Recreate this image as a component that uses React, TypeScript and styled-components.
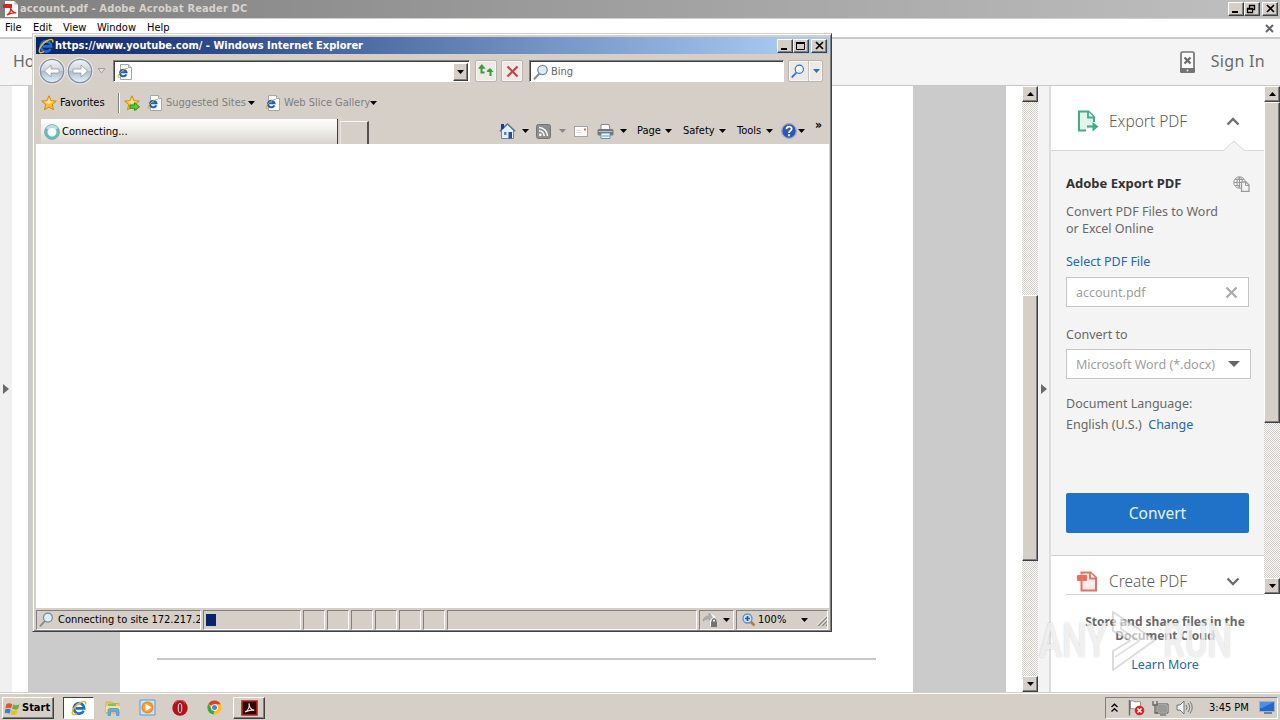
import React from 'react';
import styled, { createGlobalStyle, css } from 'styled-components';

const UI = `'DejaVu Sans Condensed', 'DejaVu Sans', sans-serif`;
const CLEAN = `'Noto Sans', 'Open Sans', sans-serif`;
const FACE = '#d5cfc8';

const Global = createGlobalStyle`
  * { box-sizing: border-box; }
  body { margin: 0; overflow: hidden; background: #fff; }
  svg { display: block; flex: none; }
`;

const raised = css`
  background: ${FACE};
  border: 1px solid;
  border-color: #fff #404040 #404040 #fff;
  box-shadow: inset -1px -1px 0 #808080;
`;
const sunken = css`
  border: 1px solid;
  border-color: #808080 #fff #fff #808080;
`;

const Desktop = styled.div`
  position: relative;
  width: 1280px;
  height: 720px;
  display: flex;
  flex-direction: column;
  overflow: hidden;
  font-family: ${UI};
  font-size: 11px;
  color: #000;
`;

const Label = styled.span<{ $w?: number; $ls?: number; $size?: number; $color?: string; $bold?: boolean; $clean?: boolean; $ml?: number; $light?: boolean }>`
  flex: none;
  white-space: nowrap;
  line-height: 1.2;
  width: ${p => (p.$w ? `${p.$w}px` : 'auto')};
  letter-spacing: ${p => p.$ls ?? 0}px;
  font-size: ${p => p.$size ?? 11}px;
  color: ${p => p.$color ?? '#000'};
  font-weight: ${p => (p.$bold ? 700 : p.$light ? 300 : 400)};
  font-family: ${p => (p.$clean ? CLEAN : UI)};
  margin-left: ${p => p.$ml ?? 0}px;
`;

const TitleBar = styled.div`
  height: 19px;
  flex: none;
  display: flex;
  align-items: center;
  padding: 0 2px 1px 3px;
  background: linear-gradient(90deg, #808080, #c0c0c0);
  border-bottom: 1px solid #d4d0c8;
`;
const Spacer = styled.div`flex: 1;`;

const CaptionButton = styled.div<{ $gap?: number }>`
  ${raised}
  width: 16px;
  height: 14px;
  margin-left: ${p => p.$gap ?? 0}px;
  display: flex;
  align-items: center;
  justify-content: center;
`;

const MenuBar = styled.div`
  height: 20px;
  flex: none;
  display: flex;
  align-items: center;
  background: #fff;
  border-bottom: 2px solid #cacaca;
  padding: 0 6px 0 5px;
`;

const HomeBar = styled.div`
  height: 47px;
  flex: none;
  display: flex;
  align-items: center;
  background: #f4f4f4;
  border-bottom: 1px solid #c8c8c8;
  padding: 0 15px 0 13px;
`;

const Body = styled.div`
  flex: 1;
  min-height: 0;
  display: flex;
`;
const NavStrip = styled.div`
  width: 12px;
  background: #f0f0f0;
  display: flex;
  align-items: center;
  padding-left: 3px;
`;
const Gutter = styled.div`width: 16px; background: #fff;`;
const Canvas = styled.div`
  width: 978px;
  background: #cbcbcb;
  padding: 0 93px 0 92px;
`;
const Page = styled.div`
  height: 100%;
  background: #fff;
  padding: 572px 37px 0;
`;
const PageRule = styled.div`height: 2px; background: #c8c8c8;`;

const Track = styled.div<{ $h?: number }>`
  width: 16px;
  height: ${p => (p.$h ? `${p.$h}px` : '100%')};
  flex: none;
  display: flex;
  flex-direction: column;
  background: repeating-conic-gradient(#fff 0 25%, #d4cdc6 0 50%) 0 0 / 2px 2px;
`;
const ArrowButton = styled.div`
  ${raised}
  height: 16px;
  flex: none;
  display: flex;
  align-items: center;
  justify-content: center;
`;
const Thumb = styled.div<{ $h: number; $top: number }>`
  ${raised}
  height: ${p => p.$h}px;
  margin-top: ${p => p.$top}px;
`;

const Splitter = styled.div`
  width: 13px;
  background: #f3f3f3;
  border-right: 2px solid #dedede;
  display: flex;
  align-items: center;
  padding-left: 3px;
`;
const Side = styled.div`flex: 1; display: flex; flex-direction: column; background: #fff;`;
const Tools = styled.div`height: 508px; display: flex;`;
const ToolColumn = styled.div`flex: 1; display: flex; flex-direction: column;`;
const ToolHeader = styled.div<{ $h: number; $pad: number }>`
  position: relative;
  height: ${p => p.$h}px;
  display: flex;
  align-items: center;
  padding: ${p => p.$pad}px 24px 0 26px;
`;
const Notch = styled.svg`position: absolute; left: 172px; bottom: -1px;`;
const Panel = styled.div`
  height: 406px;
  background: #f4f4f4;
  border-top: 1px solid #d8d8d8;
  border-bottom: 1px solid #d0d0d0;
  padding: 23px 13px 0 15px;
  display: flex;
  flex-direction: column;
  align-items: flex-start;
`;
const PanelTitle = styled.div`width: 184px; height: 20px; display: flex; justify-content: space-between; align-items: center;`;
const Para = styled.div<{ $mt: number; $color?: string }>`
  margin-top: ${p => p.$mt}px;
  font: 12.5px/17px ${CLEAN};
  color: ${p => p.$color ?? '#686868'};
  white-space: pre;
`;
const Field = styled.div<{ $w: number; $mt: number }>`
  width: ${p => p.$w}px;
  height: 30px;
  margin-top: ${p => p.$mt}px;
  border: 1px solid #c6c6c6;
  background: #fff;
  display: flex;
  align-items: center;
  justify-content: space-between;
  padding: 0 10px 0 9px;
`;
const Link = styled.span`color: #2468b0;`;
const ConvertButton = styled.div`
  width: 183px;
  height: 40px;
  margin-top: 60px;
  border-radius: 2px;
  background: #2072c9;
  display: flex;
  align-items: center;
  justify-content: center;
`;
const Footer = styled.div`
  flex: 1;
  margin-left: 15px;
  margin-right: 16px;
  border-top: 1px solid #d4d4d4;
  display: flex;
  flex-direction: column;
  align-items: center;
  padding-top: 20px;
`;

/* browser window */
const Window = styled.div`
  position: absolute;
  left: 32px;
  top: 33px;
  width: 800px;
  height: 599px;
  background: ${FACE};
  border: 1px solid;
  border-color: #d4d0c8 #404040 #404040 #d4d0c8;
  box-shadow: inset 1px 1px 0 #fff, inset -1px -1px 0 #808080;
  padding: 3px 2px 1px 3px;
  display: flex;
  flex-direction: column;
`;
const WinTitle = styled.div`
  height: 17px;
  flex: none;
  display: flex;
  align-items: center;
  padding: 0 2px;
  background: linear-gradient(90deg, #0a246a, #a6caf0 95%);
`;
const NavRow = styled.div`
  height: 34px;
  display: flex;
  align-items: center;
  padding-left: 2px;
`;
const Input = styled.div<{ $w: number; $ml: number }>`
  ${sunken}
  box-shadow: inset 1px 1px 0 #404040;
  width: ${p => p.$w}px;
  height: 22px;
  margin-left: ${p => p.$ml}px;
  background: #fff;
  display: flex;
  align-items: center;
  padding: 1px 1px 0 3px;
`;
const DropButton = styled(ArrowButton)`width: 15px; height: 18px; margin-bottom: 0;`;
const SoftButton = styled.div<{ $w: number; $ml: number }>`
  width: ${p => p.$w}px;
  height: 22px;
  margin-left: ${p => p.$ml}px;
  border: 1px solid #b8b4b0;
  border-radius: 2px;
  background: #ece9e6;
  box-shadow: inset 0 0 0 1px #f8f6f4;
  display: flex;
  align-items: center;
  justify-content: center;
`;
const Divider = styled.div<{ $ml: number; $h: number; $c?: string }>`
  width: 2px;
  height: ${p => p.$h}px;
  margin-left: ${p => p.$ml}px;
  background: linear-gradient(90deg, ${p => p.$c ?? '#808080'} 50%, #fff 50%);
`;
const FavRow = styled.div`height: 29px; display: flex; align-items: center; padding-left: 5px;`;
const TabRow = styled.div`height: 27px; display: flex; align-items: flex-end; padding-left: 5px;`;
const Tab = styled.div`
  width: 297px;
  height: 25px;
  padding-left: 3px;
  display: flex;
  align-items: center;
  background: linear-gradient(#fff, #f2f0ec 40%, #d8d3cb);
  border-right: 1px solid #404040;
`;
const NewTab = styled.div`
  width: 29px;
  height: 23px;
  margin-left: 2px;
  border-top: 1px solid #f8f6f4;
  border-left: 1px solid #eae6e2;
  border-right: 2px solid #55504c;
`;
const Commands = styled.div`height: 26px; flex: 1; display: flex; align-items: center; margin-left: 130px;`;
const Chevrons = styled(Label)`align-self: flex-start;`;
const View = styled.div`flex: 1; background: #fff;`;
const StatusBar = styled.div`height: 22px; display: flex; align-items: center; gap: 2px; padding-top: 1px;`;
const Pane = styled.div<{ $w: number }>`
  ${sunken}
  width: ${p => p.$w}px;
  height: 20px;
  flex: none;
  overflow: hidden;
  display: flex;
  align-items: center;
  padding-left: 2px;
`;
const Block = styled.div`width: 10px; height: 12px; background: #0a246a;`;

const Gap = styled.div<{ $w: number }>`width: ${p => p.$w}px; flex: none;`;

const Taskbar = styled.div`
  height: 28px;
  flex: none;
  display: flex;
  align-items: center;
  background: ${FACE};
  border-top: 1px solid #d4d0c8;
  box-shadow: inset 0 1px 0 #fff;
  padding: 2px 2px 0 2px;
`;
const Start = styled.div`
  ${raised}
  width: 52px;
  height: 22px;
  display: flex;
  align-items: center;
  padding-left: 2px;
`;
const Task = styled.div<{ $kind: 'pressed' | 'raised' | 'flat'; $ml: number; $w: number }>`
  width: ${p => p.$w}px;
  height: 22px;
  margin-left: ${p => p.$ml}px;
  display: flex;
  align-items: center;
  justify-content: center;
  ${p => p.$kind === 'raised' && raised}
  ${p => p.$kind === 'pressed' && css`background: #fff; border: 1px solid; border-color: #404040 #fff #fff #404040;`}
`;
const Tray = styled.div`
  ${sunken}
  width: 173px;
  height: 22px;
  display: flex;
  align-items: center;
  padding-left: 5px;
`;

const Watermark = styled.div`
  position: absolute;
  left: 1039px;
  top: 609px;
  height: 64px;
  display: flex;
  align-items: center;
`;
const MarkText = styled.span<{ $w: number }>`
  width: ${p => p.$w}px;
  font: 500 48px/64px Roboto, sans-serif;
  color: rgba(255, 255, 255, 0.72);
  text-shadow: 0 0 2px rgba(130, 130, 130, 0.45);
  transform: scaleX(0.72);
  transform-origin: 0 50%;
  white-space: nowrap;
`;

const Tri = ({ dir = 'down', w = 7, c = '#000' }: { dir?: 'down' | 'up' | 'right'; w?: number; c?: string }) => {
  const h = Math.ceil(w / 2);
  if (dir === 'right') return <svg width={h + 2} height={w + 3}><path d={`M0 0V${w + 3}L${h + 2} ${(w + 3) / 2}Z`} fill={c} /></svg>;
  return <svg width={w} height={h}><path d={dir === 'down' ? `M0 0H${w}L${w / 2} ${h}Z` : `M0 ${h}H${w}L${w / 2} 0Z`} fill={c} /></svg>;
};

const IeGlyph = ({ s = 16 }: { s?: number }) => (
  <svg width={s} height={s} viewBox="0 0 16 16">
    <path d="M12.6 10.8A5.2 5.2 0 1 1 13.2 8.4H4.6" fill="none" stroke="#1c6fcd" strokeWidth="2.7" />
    <path d="M4.6 6.2a4.2 4.2 0 0 1 5-2.2" fill="none" stroke="#7cc4f4" strokeWidth="1.1" />
    <path d="M14.6 4.4C15.6 1.2 12.6.6 8.6 3 4.600 5.400.8 10 1.200 13.200c.3 2.200 2.600 1.600 4.600.4" fill="none" stroke="#f0b41c" strokeWidth="1.500" />
  </svg>
);
const IePage = () => (
  <svg width="16" height="16" viewBox="0 0 16 16">
    <path d="M3.500.5h8l3 3v12h-11z" fill="#fdfdfd" stroke="#a4a8ac" />
    <path d="M11.500.5v3h3" fill="#dde" stroke="#a4a8ac" />
    <path d="M9.300 10.300A3.300 3.300 0 1 1 9.500 8.300H4" fill="none" stroke="#1b5fc0" strokeWidth="2" />
    <path d="M11 4.500C10 3.300 1.500 8 1 12.500c0 1.200 1 1.200 2.500.5" fill="none" stroke="#e3ae20" />
  </svg>
);
const Star = ({ add = false }: { add?: boolean }) => (
  <svg width="16" height="16" viewBox="0 0 16 16">
    <path d="M8 .8l2.100 4.800 5.200.5-3.900 3.500 1.100 5.200L8 12.100l-4.500 2.700 1.100-5.200L.7 6.100l5.200-.5z" fill="#fbbd2c" stroke="#d08316" strokeWidth=".9" />
    <path d="M8 2.800l1.300 3.500 3.300.4-5 2.200-4.500-2.200 3.500-.4z" fill="#ffe58a" />
    {add && <path d="M6 10h4.500V7.600L15.600 11.800 10.500 15.600V13.300H6z" fill="#59c83c" stroke="#218a1c" strokeWidth=".9" />}
  </svg>
);
const Round = ({ flip = false }: { flip?: boolean }) => (
  <svg width="28" height="28" viewBox="0 0 28 28">
    <defs>
      <linearGradient id="orb" x1="0" y1="0" x2="0" y2="1">
        <stop offset="0" stopColor="#f4f6f9" /><stop offset=".48" stopColor="#ccd2dc" /><stop offset=".52" stopColor="#aebccc" /><stop offset="1" stopColor="#e2f4fc" />
      </linearGradient>
    </defs>
    <circle cx="14" cy="14" r="13.400" fill="#e9e8ea" />
    <circle cx="14" cy="14" r="11.700" fill="url(#orb)" stroke="#858d9a" strokeWidth="1.200" />
    <path transform={flip ? 'translate(28 0) scale(-1 1)' : undefined} d="M6.500 14l6.500-6v4h8v4h-8v4z" fill="#fff" stroke="#8f9bab" strokeWidth=".8" />
  </svg>
);
const Lens = ({ c = '#7a8792', f = '#dcedfa', h = '#8b8b8b', s = 16 }: { c?: string; f?: string; h?: string; s?: number }) => (
  <svg width={s} height={s} viewBox="0 0 16 16">
    <path d="M6 10L1.500 14.800" stroke={h} strokeWidth="2" strokeLinecap="round" />
    <circle cx="9.500" cy="6" r="4.700" fill={f} stroke={c} strokeWidth="1.300" />
  </svg>
);
const Min = () => <svg width="12" height="10"><path d="M2 8h6" stroke="#000" strokeWidth="2" /></svg>;
const Max = () => <svg width="12" height="10"><path d="M1.500 1.500h8v7h-8zM1 1.500h9" fill="none" stroke="#000" /><path d="M1 2h9" stroke="#000" strokeWidth="2" /></svg>;
const Restore = () => <svg width="12" height="10"><path d="M3.500 4V1.500h5v4H7M3 1.500h6M1.500 4.500h5v4h-5zM1 5h6" fill="none" stroke="#000" strokeWidth="1.300" /></svg>;
const Cross = ({ s = 9, c = '#000', w = 1.700 }: { s?: number; c?: string; w?: number }) => (
  <svg width={s} height={s} viewBox="0 0 9 9"><path d="M1 1l7 7M8 1L1 8" stroke={c} strokeWidth={w} /></svg>
);
const PdfFile = () => (
  <svg width="16" height="16" viewBox="0 0 16 16">
    <path d="M2 0h9l4 4v12H2z" fill="#fdf7f5" /><path d="M11 0v4h4" fill="#d9d2d0" />
    <path d="M0 3h9v4H0z" fill="#d8241c" />
    <path d="M4 14c3-2 4-5 3.600-7 1 3 3 4.600 5.600 5-3-.3-6 .3-9.200 2z" fill="none" stroke="#d42a20" strokeWidth="1.200" />
  </svg>
);
const Phone = () => (
  <svg width="15" height="22" viewBox="0 0 15 22">
    <rect x="1" y="1" width="13" height="20" rx="1.500" fill="#fafafa" stroke="#747474" strokeWidth="1.700" />
    <path d="M0 17h15v3.500a1.500 1.500 0 0 1-1.500 1.500h-12A1.500 1.500 0 0 1 0 20.500z" fill="#747474" />
    <path d="M4.500 6.500l6 6M10.500 6.500l-6 6" stroke="#6a6a6a" strokeWidth="2.200" /><circle cx="7.500" cy="19.500" r=".9" fill="#eee" />
  </svg>
);
const ExportIcon = () => (
  <svg width="22" height="23" viewBox="0 0 22 23">
    <path d="M9 20.500H2V1.500h9.500l5.500 5.500v5" fill="#e4f5ee" stroke="#3fae85" strokeWidth="2" />
    <path d="M11 1.500V7.500h6" fill="#fff" stroke="#3fae85" strokeWidth="1.800" />
    <path d="M10 16.500h8" stroke="#3fae85" strokeWidth="2.200" /><path d="M15.500 12l6 4.500-6 5z" fill="#3fae85" />
  </svg>
);
const CreateIcon = () => (
  <svg width="22" height="21" viewBox="0 0 22 21">
    <path d="M4.500 9.500V19.500h14.500V6.500L13.500 1.500h-9v2" fill="#fdecea" stroke="#e8705f" strokeWidth="2" />
    <path d="M13 1.500v6h6" fill="#fff" stroke="#e8705f" strokeWidth="1.800" />
    <rect x="0" y="4" width="10" height="6" rx="1" fill="#e8705f" />
  </svg>
);
const Chevron = ({ up = false }: { up?: boolean }) => (
  <svg width="14" height="9" viewBox="0 0 14 9"><path d={up ? 'M1.500 7.500L7 2l5.500 5.500' : 'M1.500 1.500L7 7l5.500-5.500'} fill="none" stroke="#6e6e6e" strokeWidth="2.400" /></svg>
);
const GlobePage = () => (
  <svg width="17" height="16" viewBox="0 0 17 16" fill="none" stroke="#9a9a9a">
    <circle cx="6.500" cy="6.500" r="5.700" /><path d="M1 6.500h8M6.500 1v11M2 3.500h9M2 9.500h5M6.500 1C3 4 3 9 6.500 12M6.500 1c2 1 3 3 3 4" />
    <path d="M8.500 6h4.500l3 3v6.500H8.500z" fill="#f4f4f4" strokeWidth="1.300" /><path d="M12.500 6v3.500H16" />
  </svg>
);
const Home = () => (
  <svg width="17" height="16" viewBox="0 0 17 16">
    <path d="M2.500 7v8.500h12V7L8.500 1.500z" fill="#e6effa" stroke="#6a83b0" />
    <path d="M.8 8.200L8.500 1l7.700 7.200" fill="none" stroke="#59759f" strokeWidth="1.500" />
    <path d="M2 1h3v4L2 7z" fill="#2433b4" /><path d="M9.500 9h3.500v6.500H9.500z" fill="#24529a" /><path d="M5 9h2.500v3H5z" fill="#4e86cc" />
  </svg>
);
const Rss = () => (
  <svg width="15" height="15" viewBox="0 0 15 15">
    <rect x=".5" y=".5" width="14" height="14" rx="2" fill="#8e8e8e" stroke="#757575" />
    <circle cx="4.300" cy="10.800" r="1.400" fill="#fff" /><path d="M3 6.800A5.200 5.200 0 0 1 8.200 12M3 3.500A8.500 8.500 0 0 1 11.500 12" fill="none" stroke="#fff" strokeWidth="1.500" />
  </svg>
);
const Mail = () => (
  <svg width="14" height="11" viewBox="0 0 14 11"><rect x=".5" y=".5" width="13" height="10" fill="#fdfcfb" stroke="#a5a3a3" /><path d="M10 2.500h2v2h-2z" fill="#df6b62" /><path d="M2.500 4.500h4M2.500 6.500h5" stroke="#dcdcdc" /></svg>
);
const Printer = () => (
  <svg width="17" height="15" viewBox="0 0 17 15">
    <path d="M4 .5h8l1 5H4z" fill="#fafafa" stroke="#888" /><rect x=".5" y="5" width="16" height="6.500" rx="1.500" fill="#73777b" />
    <path d="M1.500 7.500h14" stroke="#b9bdc1" /><path d="M4 9h9v5.500H4z" fill="#eff7fe" stroke="#6a8dab" /><path d="M5 12h7" stroke="#4da0dd" />
  </svg>
);
const Help = () => (
  <svg width="16" height="16" viewBox="0 0 16 16"><circle cx="8" cy="8" r="7.300" fill="#2c58b8" stroke="#a4a6b4" strokeWidth="1.300" /><path d="M5.500 6.200c0-3.600 5.200-3.300 5.200-.4C10.700 7.800 8 7.700 8 10M8 11.200v2" fill="none" stroke="#fff" strokeWidth="1.800" /></svg>
);
const Refresh = () => (
  <svg width="16" height="14" viewBox="0 0 16 14" fill="none" stroke="#3c9c38" strokeWidth="2">
    <path d="M3.500 4v4.500h3M12.500 12V6.500H9.500" /><path d="M3.800 0L0 4.800h7.600zM12 4L8.500 8h7z" fill="#3c9c38" stroke="none" />
  </svg>
);
const Spinner = () => (
  <svg width="16" height="16" viewBox="0 0 16 16"><circle cx="8" cy="8" r="6" fill="#f7fbfb" stroke="#63bdb8" strokeWidth="3" /><path d="M3 4.800A6 6 0 0 1 13 4.800" fill="none" stroke="#b9e6e2" strokeWidth="2.500" /><circle cx="8" cy="8" r="7.500" fill="none" stroke="#74a9ac" strokeWidth=".7" /></svg>
);
const Flag = () => (
  <svg width="17" height="16" viewBox="0 0 17 16">
    <path d="M1.500 4c2-1.300 3.700-1 5.800.2L6 8.500C4.300 7.500 2.500 7.300.3 8.500z" fill="#e8531f" /><path d="M8.200 4.500c2.300 1 4 1 6.300-.3L13 8.800c-2 1.200-4 1-6 0z" fill="#69b32d" />
    <path d="M.2 9.500c2-1 3.700-1 5.600.2l-1.300 4C2.800 12.700 1 12.700-1 13.800z" fill="#2d83d8" /><path d="M6.600 10c2.200 1.100 4 1.200 6 0l-1.300 4.300c-2 1-4 .9-6-.2z" fill="#f6b91d" />
  </svg>
);
const Folder = () => (
  <svg width="17" height="16" viewBox="0 0 17 16"><path d="M1 2h6l1 1.500h6V13H1z" fill="#f3ce68" stroke="#c9a03c" strokeWidth=".7" /><path d="M3 3.500h8v4H3z" fill="#7dc36a" /><path d="M1 6h14v6H1z" fill="#f9e19a" /><path d="M3 15.500V10.500q0-2 2-2h7q2 0 2 2v5h-2.500V11.500h-6v4z" fill="#62aee4" stroke="#3f86bf" strokeWidth=".6" /></svg>
);
const Media = () => (
  <svg width="17" height="17" viewBox="0 0 17 17"><path d="M1 1h15v15H1z" fill="#c9e2f8" stroke="#5a9bd8" /><circle cx="8.500" cy="8.500" r="6" fill="#f08a1c" /><circle cx="8.500" cy="8.500" r="4.500" fill="#f7a231" /><path d="M6.500 4.800l6 3.700-6 3.700z" fill="#fff" /></svg>
);
const Opera = () => (
  <svg width="16" height="16" viewBox="0 0 16 16"><circle cx="8" cy="8" r="7.700" fill="#b5101b" /><path d="M2.500 3a7 7 0 0 1 11 0" fill="none" stroke="#d84850" strokeWidth="1.500" /><ellipse cx="8" cy="8" rx="2.700" ry="5.600" fill="#f0e4e2" stroke="#7c0a10" strokeWidth=".6" /><ellipse cx="8" cy="8" rx="1.200" ry="4.600" fill="#b5101b" /></svg>
);
const Chrome = () => (
  <svg width="15" height="15" viewBox="0 0 16 16"><circle cx="8" cy="8" r="7.500" fill="#fbc116" /><path d="M8 8L1.500 4.200A7.500 7.500 0 0 1 14.600 4.500H8z" fill="#e33b2e" /><path d="M8 8l-1 7.500A7.500 7.500 0 0 1 1.500 4.200L5 10z" fill="#2da94f" /><circle cx="8" cy="8" r="3.600" fill="#fff" /><circle cx="8" cy="8" r="2.700" fill="#4a82ee" /></svg>
);
const Acrobat = () => (
  <svg width="17" height="16" viewBox="0 0 17 16"><path d="M1 1h15v14H1z" fill="#2a0606" stroke="#b4241c" strokeWidth="1.600" /><path d="M4 12c3-1.500 4.800-5 4-8.500 0 3 2 6 5.300 6.800C10 9.500 7 10.500 4 12z" fill="none" stroke="#f3e8e6" strokeWidth="1.200" /></svg>
);
const ActionFlag = () => (
  <svg width="17" height="17" viewBox="0 0 17 17"><path d="M1.500 1v15.500" stroke="#6e6e6e" strokeWidth="1.500" /><path d="M2.500 2c3-1 4 1.500 6 .8 2 -.5 3 0 4 .3V10c-3-1-4 .5-6 0-1.500-.6-2.500-.6-4 0z" fill="#fff" stroke="#777" strokeWidth=".8" /><circle cx="11.500" cy="11.500" r="4.800" fill="#d8262a" /><path d="M9.500 9.500l4 4M13.500 9.500l-4 4" stroke="#fff" strokeWidth="1.500" /></svg>
);
const Network = () => (
  <svg width="17" height="16" viewBox="0 0 17 16"><path d="M5.500 4.500h10v8h-10z" fill="#9a9a98" stroke="#f6f6f6" /><path d="M5 4h11v9H5zM8 15h6" fill="none" stroke="#555" /><path d="M1 1v4h4V1M3 5v8h3" fill="none" stroke="#666" strokeWidth="1.300" /></svg>
);
const Sound = () => (
  <svg width="17" height="15" viewBox="0 0 17 15"><path d="M1 5h3l4-4v13l-4-4H1z" fill="#f4f4f4" stroke="#777" /><path d="M10 5q2 2.500 0 5M12 3q3.500 4.500 0 9M14 1.500q4.500 6 0 12" fill="none" stroke="#777" /></svg>
);
const Monitor = () => (
  <svg width="16" height="13" viewBox="0 0 16 13"><path d="M.5.5h15v10H.5z" fill="#2767c4" stroke="#9ab4d4" /><path d="M1 1h14L3 7H1z" fill="#4a90e4" /><path d="M5 12h8" stroke="#55667c" strokeWidth="1.500" /></svg>
);
const Lock = () => (
  <svg width="17" height="16" viewBox="0 0 17 16"><path d="M8 2a6 6 0 0 1 6 6v6H8z" fill="#fafafa" /><path d="M1 9c0-3 3-5 6-5V1l3.500 4L7 8.500V6.500C4.500 6.500 3 8 1 9z" fill="#b2b0b0" stroke="#909090" strokeWidth=".6" /><path d="M9 9.500h6V15H9z" fill="#737373" /><path d="M10.300 10V8q1.700-2.500 3.400 0v2" fill="none" stroke="#737373" strokeWidth="1.300" /></svg>
);
const ZoomIn = () => (
  <svg width="14" height="14" viewBox="0 0 14 14"><path d="M8.500 8.500l4 4" stroke="#b87a42" strokeWidth="2.500" /><circle cx="5.500" cy="5.500" r="4.500" fill="#cfe5f8" stroke="#5f8fc8" strokeWidth="1.300" /><path d="M3 5.500h5M5.500 3v5" stroke="#1f58b0" strokeWidth="1.700" /></svg>
);
const Grip = () => <svg width="12" height="12" viewBox="0 0 12 12"><path d="M1 12L12 1M5 12l7-7M9 12l3-3" stroke="#858280" strokeWidth="1.500" /><path d="M0 11.500L11.500 0M4 11.500L11.500 4" stroke="#fff" strokeWidth=".8" /></svg>;
const Play = () => (
  <svg width="58" height="64" viewBox="0 0 58 64">
    <path d="M8 3L50 31 8 61V42l17-10L8 22z" fill="rgba(255,255,255,.6)" stroke="rgba(140,140,140,.3)" strokeWidth="2" strokeLinejoin="round" />
    <path d="M16 10v10l18 12L10 48" fill="none" stroke="rgba(150,150,150,.28)" strokeWidth="2" />
  </svg>
);

const Reader = () => (
  <>
    <TitleBar>
      <PdfFile />
      <Label $bold $color="#d6d2cc" $ml={1} $ls={0.15}>account.pdf - Adobe Acrobat Reader DC</Label>
      <Spacer />
      <CaptionButton><Min /></CaptionButton>
      <CaptionButton><Restore /></CaptionButton>
      <CaptionButton $gap={2}><Cross /></CaptionButton>
    </TitleBar>
    <MenuBar>
      <Label $w={28}>File</Label>
      <Label $w={30}>Edit</Label>
      <Label $w={34}>View</Label>
      <Label $w={50}>Window</Label>
      <Label>Help</Label>
      <Spacer />
      <Cross s={9} c="#666" w={2} />
    </MenuBar>
    <HomeBar>
      <Label $clean $size={16} $color="#6a6a6a">Home</Label>
      <Spacer />
      <Phone />
      <Label $clean $size={16} $color="#6a6a6a" $ml={16} $ls={0.3}>Sign In</Label>
    </HomeBar>
  </>
);

const SidePane = () => (
  <Side>
    <Tools>
      <ToolColumn>
        <ToolHeader $h={64} $pad={6}>
          <ExportIcon />
          <Label $clean $light $size={15.500} $color="#5c5c5c" $ml={10}>Export PDF</Label>
          <Spacer />
          <Chevron up />
          <Notch width="22" height="11" viewBox="0 0 22 11"><path d="M0 11L11 1l11 10" fill="#f4f4f4" stroke="#d8d8d8" /></Notch>
        </ToolHeader>
        <Panel>
          <PanelTitle>
            <Label $clean $bold $size={13} $color="#323232">Adobe Export PDF</Label>
            <GlobePage />
          </PanelTitle>
          <Para $mt={9}>{'Convert PDF Files to Word\nor Excel Online'}</Para>
          <Para $mt={16}><Link>Select PDF File</Link></Para>
          <Field $w={183} $mt={7}>
            <Label $clean $size={12.500} $color="#a0a0a0">account.pdf</Label>
            <Cross s={13} c="#aaa" w={1.500} />
          </Field>
          <Para $mt={19}>Convert to</Para>
          <Field $w={185} $mt={6}>
            <Label $clean $size={12.500} $color="#a0a0a0">Microsoft Word (*.docx)</Label>
            <Tri w={12} c="#666" />
          </Field>
          <Para $mt={16}>Document Language:</Para>
          <Para $mt={4}>English (U.S.)  <Link>Change</Link></Para>
          <ConvertButton><Label $clean $size={15.500} $color="#e8f2fc">Convert</Label></ConvertButton>
        </Panel>
        <ToolHeader $h={38} $pad={13}>
          <CreateIcon />
          <Label $clean $light $size={15.500} $color="#5c5c5c" $ml={10}>Create PDF</Label>
          <Spacer />
          <Chevron />
        </ToolHeader>
      </ToolColumn>
      <Track>
        <ArrowButton><Tri dir="up" /></ArrowButton>
        <Thumb $h={321} $top={0} />
        <Spacer />
        <ArrowButton><Tri /></ArrowButton>
      </Track>
    </Tools>
    <Footer>
      <Label $clean $bold $size={12} $color="#6a6a6a">Store and share files in the</Label>
      <Label $clean $bold $size={12} $color="#6a6a6a">Document Cloud</Label>
      <Gap $w={1} />
      <Para $mt={12}><Link>Learn More</Link></Para>
    </Footer>
  </Side>
);

const Browser = () => (
  <Window>
    <WinTitle>
      <IeGlyph />
      <Label $bold $color="#fff" $ml={1}>https://www.youtube.com/ - Windows Internet Explorer</Label>
      <Spacer />
      <CaptionButton><Min /></CaptionButton>
      <CaptionButton><Max /></CaptionButton>
      <CaptionButton $gap={2}><Cross /></CaptionButton>
    </WinTitle>
    <NavRow>
      <Round />
      <Round flip />
      <Gap $w={3} />
      <svg width="9" height="6"><path d="M1 .5h7L4.500 5z" fill="#e3dfda" stroke="#a29e9a" /></svg>
      <Input $w={357} $ml={7}><IePage /><Spacer /><DropButton><Tri /></DropButton></Input>
      <SoftButton $w={22} $ml={5}><Refresh /></SoftButton>
      <SoftButton $w={22} $ml={4}><Cross s={13} c="#cb4148" w={1.500} /></SoftButton>
      <Input $w={255} $ml={6}><Lens /><Label $color="#666" $ml={2}>Bing</Label></Input>
      <SoftButton $w={35} $ml={4}>
        <Lens c="#2d6cd6" f="#fff" h="#2d6cd6" s={14} />
        <Divider $ml={3} $h={20} $c="#c4c0bc" />
        <Gap $w={3} />
        <Tri c="#2f6fc0" />
      </SoftButton>
    </NavRow>
    <FavRow>
      <Star />
      <Label $w={58} $ml={3}>Favorites</Label>
      <Divider $ml={0} $h={20} />
      <Gap $w={4} />
      <Star add />
      <Gap $w={7} />
      <IePage />
      <Label $color="#808080" $w={82} $ml={3}>Suggested Sites</Label>
      <Tri />
      <Gap $w={10} />
      <IePage />
      <Label $color="#808080" $w={86} $ml={3}>Web Slice Gallery</Label>
      <Tri />
    </FavRow>
    <TabRow>
      <Tab><Spinner /><Label $ml={2}>Connecting...</Label></Tab>
      <NewTab />
      <Commands>
        <Home /><Gap $w={6} /><Tri />
        <Gap $w={7} /><Rss /><Gap $w={8} /><Tri c="#8a8683" />
        <Gap $w={8} /><Mail /><Gap $w={9} /><Printer /><Gap $w={6} /><Tri />
        <Label $w={28} $ml={10}>Page</Label><Tri />
        <Label $w={36} $ml={11}>Safety</Label><Tri />
        <Label $w={29} $ml={11}>Tools</Label><Tri />
        <Gap $w={8} /><Help /><Gap $w={1} /><Tri />
        <Chevrons $bold $size={12} $ml={10}>»</Chevrons>
      </Commands>
    </TabRow>
    <View />
    <StatusBar>
      <Pane $w={165}><Lens s={15} /><Label $ml={4}>Connecting to site 172.217.21</Label></Pane>
      <Pane $w={98}><Block /></Pane>
      {[0, 1, 2, 3, 4, 5].map(i => <Pane key={i} $w={22} />)}
      <Pane $w={250} />
      <Pane $w={35}><Lock /><Gap $w={4} /><Tri /></Pane>
      <Pane $w={92}><Gap $w={3} /><ZoomIn /><Label $w={43} $ml={2}>100%</Label><Tri /><Gap $w={9} /><Grip /></Pane>
    </StatusBar>
  </Window>
);

export default function App() {
  return (
    <Desktop>
      <Global />
      <Reader />
      <Body>
        <NavStrip><Tri dir="right" c="#6a6a6a" /></NavStrip>
        <Gutter />
        <Canvas><Page><PageRule /></Page></Canvas>
        <Gutter />
        <Track>
          <ArrowButton><Tri dir="up" /></ArrowButton>
          <Thumb $h={266} $top={193} />
          <Spacer />
          <ArrowButton><Tri /></ArrowButton>
        </Track>
        <Splitter><Tri dir="right" c="#6a6a6a" /></Splitter>
        <SidePane />
      </Body>
      <Taskbar>
        <Start><Flag /><Label $bold>Start</Label></Start>
        <Task $kind="pressed" $ml={9} $w={31}><IeGlyph /></Task>
        <Task $kind="flat" $ml={9} $w={20}><Folder /></Task>
        <Task $kind="flat" $ml={14} $w={20}><Media /></Task>
        <Task $kind="flat" $ml={13} $w={20}><Opera /></Task>
        <Task $kind="flat" $ml={14} $w={20}><Chrome /></Task>
        <Task $kind="raised" $ml={9} $w={32}><Acrobat /></Task>
        <Spacer />
        <Tray>
          <svg width="7" height="10"><path d="M.5 4L3.500 1.200 6.500 4M.5 8.500L3.500 5.700 6.500 8.500" fill="none" stroke="#000" strokeWidth="1.300" /></svg>
          <Gap $w={10} /><ActionFlag /><Gap $w={7} /><Network /><Gap $w={7} /><Sound />
          <Label $w={50} $ml={16}>3:45 PM</Label>
          <Monitor />
        </Tray>
      </Taskbar>
      <Browser />
      <Watermark>
        <MarkText $w={66}>ANY</MarkText>
        <Play />
        <MarkText $w={66}>RUN</MarkText>
      </Watermark>
    </Desktop>
  );
}
